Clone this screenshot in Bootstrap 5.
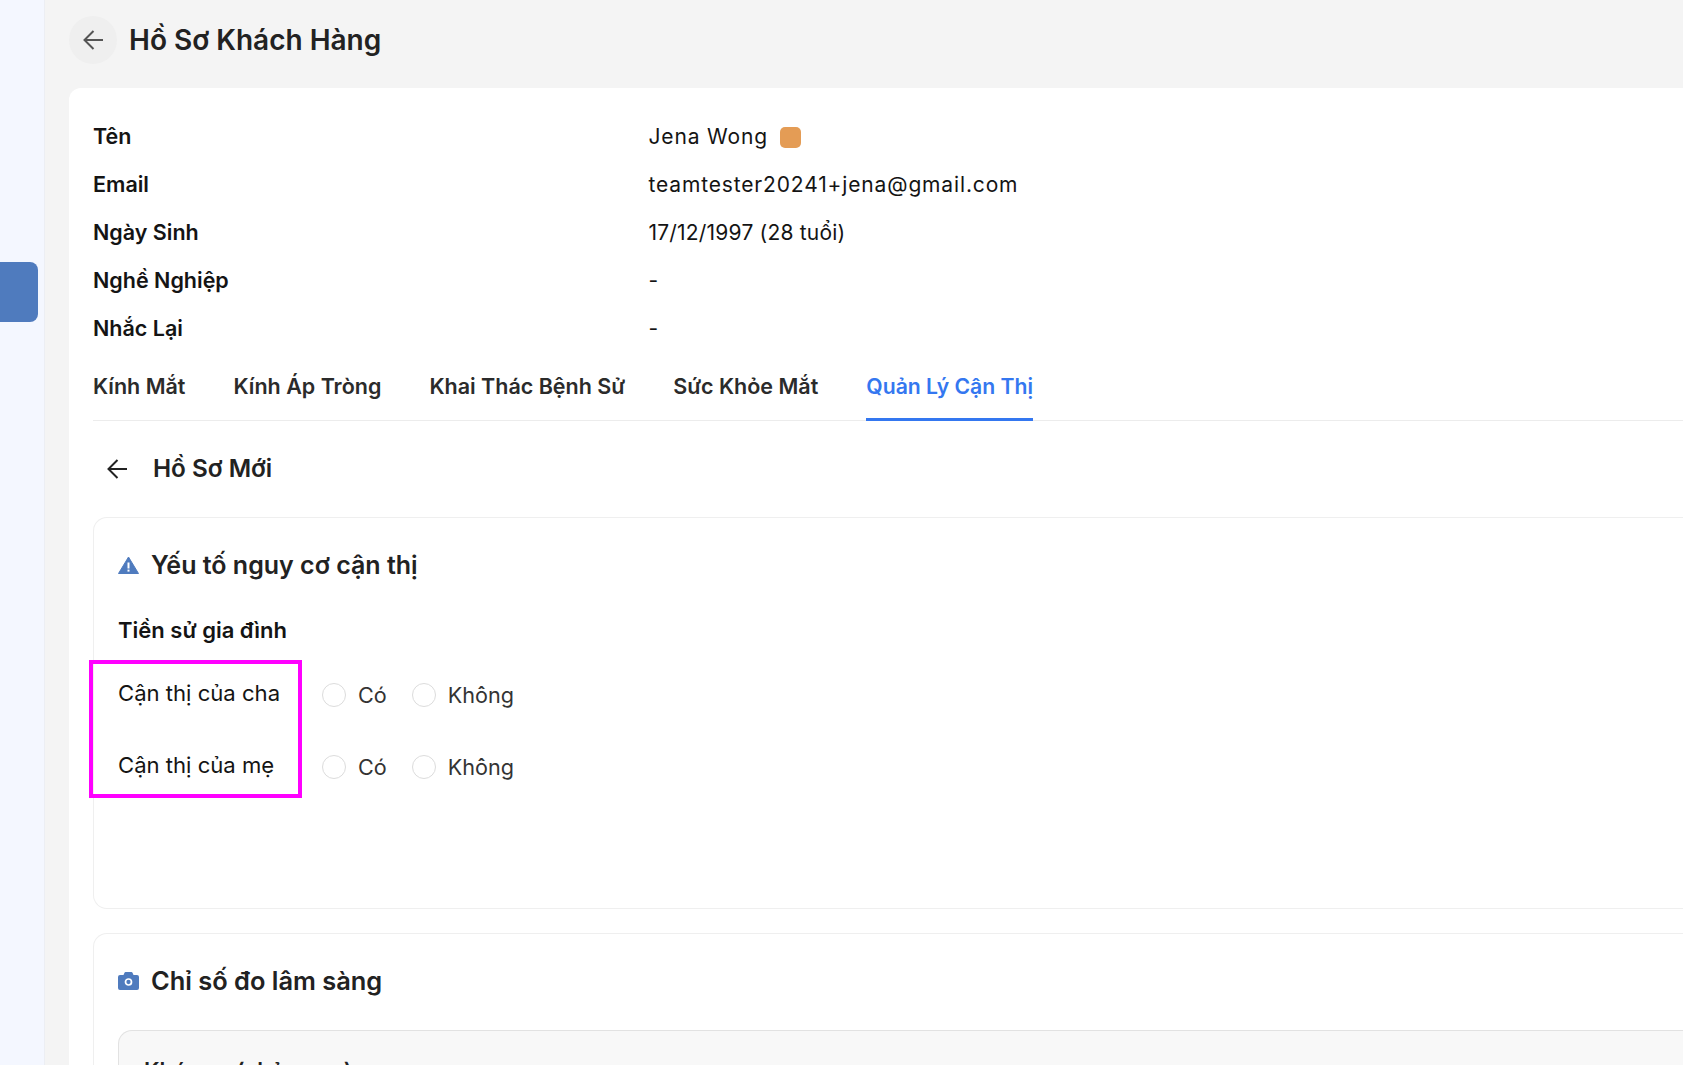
<!DOCTYPE html>
<html lang="vi">
<head>
  <meta charset="UTF-8" />
  <meta name="viewport" content="width=device-width, initial-scale=1" />
  <title>Hồ Sơ Khách Hàng</title>
  <link href="https://cdn.jsdelivr.net/npm/bootstrap@5.3.0/dist/css/bootstrap.min.css" rel="stylesheet" />
  <style>
    html, body {
      height: 100%;
      overflow: hidden;
    }
    body {
      background-color: #f4f4f4;
      font-family: "Inter", "Noto Sans", sans-serif;
      color: #141414;
    }
    .app-shell {
      height: 1065px;
      overflow: hidden;
    }
    .side-rail {
      width: 45px;
      flex: none;
      background-color: #f4f7ff;
      border-right: 1px solid #eceef3;
      padding-top: 262px;
    }
    .side-active {
      width: 38px;
      height: 60px;
      background-color: #4f7bbe;
      border-radius: 0 8px 8px 0;
    }
    .main-area {
      flex: 1;
      min-width: 0;
      padding: 16px 0 0 24px;
    }
    .back-circle {
      width: 48px;
      height: 48px;
      border-radius: 50%;
      background-color: #efefef;
      border: 0;
      padding: 0;
    }
    .page-title {
      font-size: 28px;
      font-weight: 600;
      color: #222;
      margin: 1px 0 0 12px;
    }
    .sheet {
      margin-top: 24px;
      background-color: #fff;
      border-radius: 12px 0 0 0;
      padding: 25px 0 0 24px;
      min-height: 980px;
    }
    .info-row {
      height: 48px;
      font-size: 21px;
    }
    .info-label {
      width: 555.5px;
      font-weight: 600;
      font-size: 21.5px;
      padding-bottom: 1px;
    }
    .info-value {
      letter-spacing: .2px;
    }
    .info-value.is-wide {
      letter-spacing: .85px;
    }
    .tag-dot {
      width: 21px;
      height: 21px;
      background-color: #e49c55;
      border-radius: 5px;
      margin-left: 12px;
    }
    .tab-strip {
      gap: 48px;
      height: 55px;
      margin-top: 13px;
      border-bottom: 1px solid #ececec;
    }
    .tab-link {
      font-size: 21.5px;
      font-weight: 600;
      color: #2b2b2b;
      text-decoration: none;
      height: 55px;
      line-height: 40px;
    }
    .tab-link.is-active {
      font-size: 21.2px;
      color: #3477f0;
      border-bottom: 3px solid #3477f0;
    }
    .sub-head {
      padding: 0 0 0 14px;
      height: 96px;
    }
    .sub-title {
      font-size: 24.3px;
      font-weight: 600;
      color: #222;
      margin: 0 0 0 26px;
    }
    .section-box {
      border: 1px solid #efefef;
      border-radius: 14px 0 0 14px;
      border-right: 0;
      padding: 0 0 0 24px;
    }
    .box-risk {
      position: relative;
      height: 392px;
    }
    .box-clinical {
      margin-top: 24px;
      height: 300px;
    }
    .section-head {
      padding-top: 29px;
      height: 65px;
    }
    .section-title {
      font-size: 25px;
      font-weight: 600;
      color: #222;
      margin: 0 0 0 12px;
    }
    .box-clinical .section-title {
      font-size: 25.4px;
    }
    .family-title {
      font-size: 22px;
      font-weight: 600;
      margin: 0;
      padding-top: 31px;
      height: 76px;
      line-height: 33px;
    }
    .risk-row {
      height: 72px;
      font-size: 21.6px;
    }
    .risk-label {
      width: 204px;
      padding-bottom: 3px;
      font-size: 22.1px;
    }
    .risk-choice {
      color: #333;
      margin-right: 25px;
    }
    .risk-radio {
      width: 24px;
      height: 24px;
      margin: 0 12px 0 0;
      border-color: #dcdcdc;
    }
    .annot-box {
      position: absolute;
      left: -5px;
      top: 142px;
      width: 213px;
      height: 138px;
      border: 4px solid #ff00ff;
      pointer-events: none;
    }
    .measure-panel {
      margin-top: 31px;
      background-color: #f8f8f8;
      border: 1px solid #e2e2e2;
      border-right: 0;
      border-radius: 14px 0 0 0;
      padding: 23px 0 0 25px;
      height: 200px;
      font-size: 22.2px;
      font-weight: 600;
      color: #222;
    }
  </style>
</head>
<body>

<div class="app-shell d-flex">
  <aside class="side-rail">
    <div class="side-active"></div>
  </aside>

  <main class="main-area">
    <div class="d-flex align-items-center">
      <button class="back-circle d-flex align-items-center justify-content-center" type="button" aria-label="Quay lại">
        <svg width="20" height="20" viewBox="0 0 20 20" fill="none" stroke="#555" stroke-width="2"><path d="M20 10H1.5M10.5 1l-9 9 9 9"/></svg>
      </button>
      <h1 class="page-title">Hồ Sơ Khách Hàng</h1>
    </div>

    <div class="sheet">
      <div class="info-row d-flex align-items-center">
        <div class="info-label">Tên</div>
        <div class="info-value is-wide d-flex align-items-center">Jena Wong <span class="tag-dot"></span></div>
      </div>
      <div class="info-row d-flex align-items-center">
        <div class="info-label">Email</div>
        <div class="info-value is-wide">teamtester20241+jena@gmail.com</div>
      </div>
      <div class="info-row d-flex align-items-center">
        <div class="info-label">Ngày Sinh</div>
        <div class="info-value">17/12/1997 (28 tuổi)</div>
      </div>
      <div class="info-row d-flex align-items-center">
        <div class="info-label">Nghề Nghiệp</div>
        <div class="info-value">-</div>
      </div>
      <div class="info-row d-flex align-items-center">
        <div class="info-label">Nhắc Lại</div>
        <div class="info-value">-</div>
      </div>

      <nav class="tab-strip d-flex">
        <a class="tab-link" href="#">Kính Mắt</a>
        <a class="tab-link" href="#">Kính Áp Tròng</a>
        <a class="tab-link" href="#">Khai Thác Bệnh Sử</a>
        <a class="tab-link" href="#">Sức Khỏe Mắt</a>
        <a class="tab-link is-active" href="#">Quản Lý Cận Thị</a>
      </nav>

      <div class="sub-head d-flex align-items-center">
        <svg width="20" height="20" viewBox="0 0 20 20" fill="none" stroke="#222" stroke-width="2"><path d="M20 10H1.5M10.5 1l-9 9 9 9"/></svg>
        <h2 class="sub-title">Hồ Sơ Mới</h2>
      </div>

      <section class="section-box box-risk">
        <div class="section-head d-flex align-items-center">
          <svg width="21" height="18" viewBox="0 0 21 18"><path fill="#4f7bbe" stroke="#4f7bbe" stroke-linejoin="round" d="M10.5 1 20.5 17.5H.5Z"/><rect x="9.5" y="6.500" width="2" height="6" fill="#fff"/><rect x="9.5" y="13.6" width="2" height="2" fill="#fff"/></svg>
          <h3 class="section-title">Yếu tố nguy cơ cận thị</h3>
        </div>
        <h4 class="family-title">Tiền sử gia đình</h4>
        <div class="risk-row d-flex align-items-center">
          <div class="risk-label">Cận thị của cha</div>
          <label class="risk-choice d-flex align-items-center"><input class="form-check-input risk-radio" type="radio" name="cha" />Có</label>
          <label class="risk-choice d-flex align-items-center"><input class="form-check-input risk-radio" type="radio" name="cha" />Không</label>
        </div>
        <div class="risk-row d-flex align-items-center">
          <div class="risk-label">Cận thị của mẹ</div>
          <label class="risk-choice d-flex align-items-center"><input class="form-check-input risk-radio" type="radio" name="me" />Có</label>
          <label class="risk-choice d-flex align-items-center"><input class="form-check-input risk-radio" type="radio" name="me" />Không</label>
        </div>
        <div class="annot-box"></div>
      </section>

      <section class="section-box box-clinical">
        <div class="section-head d-flex align-items-center">
          <svg width="21" height="18" viewBox="0 0 21 18"><path fill="#4f7bbe" d="M2 3h3.5L6.5.8c.2-.5.5-.8 1-.8h6c.5 0 .8.3 1 .8L15.5 3H19a2 2 0 0 1 2 2v11a2 2 0 0 1-2 2H2a2 2 0 0 1-2-2V5a2 2 0 0 1 2-2Z"/><circle cx="10.5" cy="10" r="3" fill="none" stroke="#fff" stroke-width="1.7"/></svg>
          <h3 class="section-title">Chỉ số đo lâm sàng</h3>
        </div>
        <div class="measure-panel">Khúc xạ (chủ quan)</div>
      </section>
    </div>
  </main>
</div>

<script src="https://cdn.jsdelivr.net/npm/bootstrap@5.3.0/dist/js/bootstrap.bundle.min.js"></script>
</body>
</html>
